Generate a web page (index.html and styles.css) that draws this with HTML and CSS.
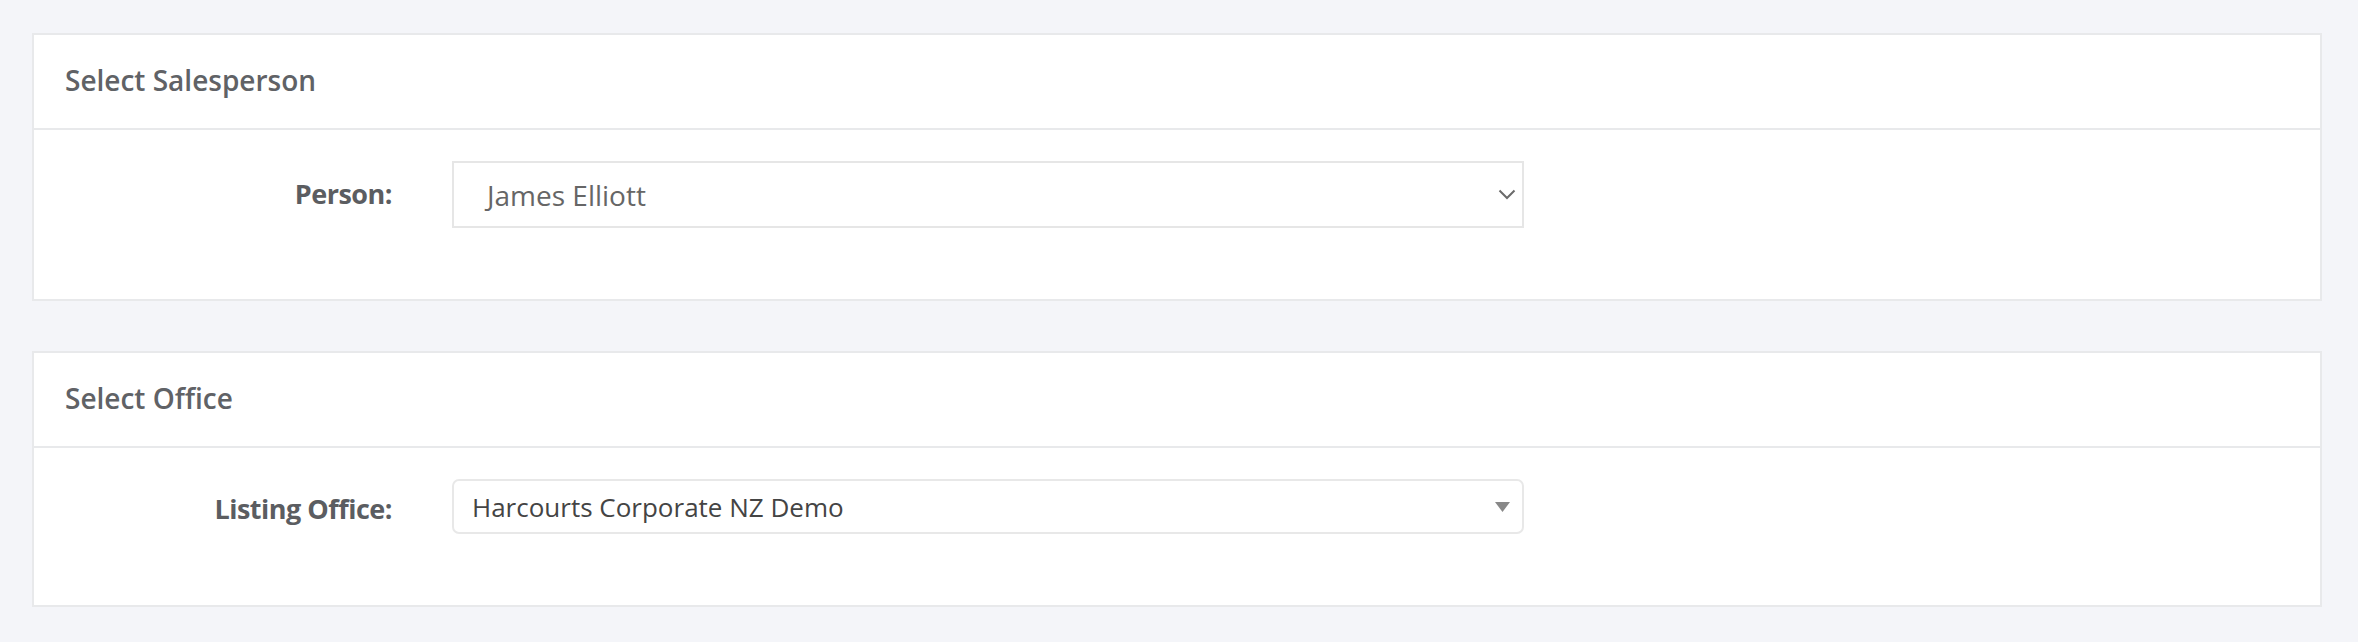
FILE: index.html
```html
<!DOCTYPE html>
<html lang="en">
<head>
<meta charset="utf-8">
<title>Select Salesperson</title>
<link rel="stylesheet" href="styles.css">
</head>
<body>
  <section class="panel">
    <header class="panel-heading">Select Salesperson</header>
    <div class="panel-body panel-body-first">
      <div class="form-row">
        <label class="control-label">Person:</label>
        <div class="select select-flat">
          <span class="select-value">James Elliott</span>
          <svg class="chevron" width="18" height="11" viewBox="0 0 18 11"><path d="M1.5 1.5 L9 9 L16.5 1.5" fill="none" stroke="#6b6b6b" stroke-width="2"/></svg>
        </div>
      </div>
    </div>
  </section>

  <section class="panel">
    <header class="panel-heading">Select Office</header>
    <div class="panel-body panel-body-second">
      <div class="form-row">
        <label class="control-label">Listing Office:</label>
        <div class="select select-round">
          <span class="select-value">Harcourts Corporate NZ Demo</span>
          <svg class="caret" width="15" height="10" viewBox="0 0 15 10"><path d="M0 0 H15 L7.5 10 Z" fill="#888"/></svg>
        </div>
      </div>
    </div>
  </section>
</body>
</html>
```

FILE: styles.css
```css
html, body {
  margin: 0;
  padding: 0;
}
body {
  background: #f4f5f9;
  font-family: "Open Sans", "Liberation Sans", sans-serif;
  padding: 33px 36px 36px 32px;
  display: flex;
  flex-direction: column;
  gap: 50px;
}
.panel {
  background: #fff;
  border: 2px solid #e8e9eb;
}
.panel-heading {
  height: 95px;
  box-sizing: border-box;
  padding-left: 31px;
  padding-bottom: 3px;
  display: flex;
  align-items: center;
  border-bottom: 2px solid #e8e9eb;
  font-size: 28px;
  font-weight: 600;
  color: #606266;
}
.panel-body-first {
  padding: 31px 0 71px;
}
.panel-body-second {
  padding: 31px 0 71px;
}
.form-row {
  display: grid;
  grid-template-columns: 358px 1072px;
  column-gap: 60px;
  align-items: start;
}
.control-label {
  text-align: right;
  font-size: 27px;
  font-weight: 700;
  letter-spacing: -0.5px;
  color: #5b5d61;
}
.select {
  box-sizing: border-box;
  display: flex;
  align-items: center;
  justify-content: space-between;
}
.select-flat {
  height: 67px;
  border: 2px solid #e6e6e6;
  padding: 0 6px 0 33px;
  color: #666;
  font-size: 28px;
}
.panel-body-first .control-label {
  padding-top: 14px;
}
.panel-body-second .control-label {
  padding-top: 11px;
}
.select-round {
  height: 55px;
  border: 2px solid #e8e8e8;
  border-radius: 7px;
  padding: 0 12px 0 18px;
  color: #444;
  font-size: 26px;
}
.chevron {
  display: block;
}
.caret {
  display: block;
}
```
